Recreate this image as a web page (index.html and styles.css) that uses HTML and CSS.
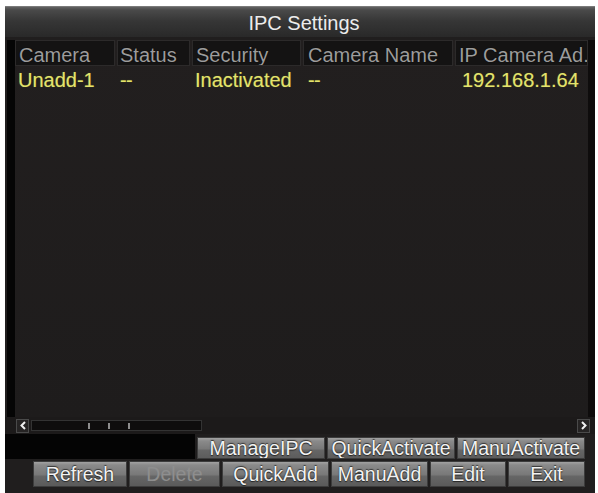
FILE: index.html
```html
<!DOCTYPE html>
<html>
<head>
<meta charset="utf-8">
<link rel="stylesheet" href="styles.css">
</head>
<body>
<div class="panel">
  <div class="title">IPC Settings</div>
  <div class="main">
    <div class="strip"></div>
    <div class="list">
      <div class="row head">
        <div class="cell">Camera</div>
        <div class="cell">Status</div>
        <div class="cell">Security</div>
        <div class="cell">Camera Name</div>
        <div class="cell">IP Camera Ad.</div>
      </div>
      <div class="row data">
        <div class="cell">Unadd-1</div>
        <div class="cell dash">--</div>
        <div class="cell">Inactivated</div>
        <div class="cell dash">--</div>
        <div class="cell">192.168.1.64</div>
      </div>
    </div>
    <div class="rstrip"></div>
  </div>
  <div class="scroll">
    <div class="arrow left"><svg width="8" height="9" viewBox="0 0 8 9"><path d="M6 1 L2.5 4.5 L6 8" fill="none" stroke="#f0f0f0" stroke-width="2"/></svg></div>
    <div class="track"><i></i><i></i><i></i></div>
    <div class="arrow right"><svg width="8" height="9" viewBox="0 0 8 9"><path d="M2 1 L5.5 4.5 L2 8" fill="none" stroke="#f0f0f0" stroke-width="2"/></svg></div>
  </div>
  <div class="btnrow r1">
    <div class="blackfill"></div>
    <div class="btn w128">ManageIPC</div>
    <div class="btn w128">QuickActivate</div>
    <div class="btn w128">ManuActivate</div>
  </div>
  <div class="btnrow r2">
    <div class="btn b-refresh">Refresh</div>
    <div class="btn b-delete disabled">Delete</div>
    <div class="btn b-quickadd">QuickAdd</div>
    <div class="btn b-manuadd">ManuAdd</div>
    <div class="btn b-edit">Edit</div>
    <div class="btn b-exit">Exit</div>
  </div>
</div>
</body>
</html>
```

FILE: styles.css
```css
html, body {
  margin: 0;
  padding: 0;
  background: #ffffff;
}

body {
  font-family: "Liberation Sans", Arial, sans-serif;
  font-size: 20px;
  overflow: hidden;
}

.panel {
  margin: 6px 0 0 5px;
  width: 590px;
  height: 487px;
  background: #201e1e;
  box-sizing: border-box;
}

.title {
  height: 31px;
  box-sizing: border-box;
  padding-top: 5px;
  line-height: 22px;
  text-align: center;
  color: #ececec;
  font-size: 20px;
  padding-left: 8px;
  background: linear-gradient(#626262 0px, #4a4a4a 3px, #363636 14px, #282828 31px);
  border-top: 1px solid #7a7a7a;
}

.main {
  margin-top: 3px;
  height: 377px;
  display: flex;
  padding-left: 2px;
}

.strip {
  width: 8px;
  background: #050505;
}

.list {
  width: 573px;
  background: linear-gradient(#221f1f, #1e1c1c);
}

.rstrip {
  flex: 1;
  background: #0e0c0c;
}

.row {
  display: grid;
  grid-template-columns: 100px 73px 109px 150px 133px;
  column-gap: 2px;
}

.cell {
  white-space: nowrap;
  overflow: hidden;
}

.head .cell {
  height: 26px;
  box-sizing: border-box;
  padding: 3px 0 0 3px;
  line-height: 22px;
  background: #141313;
  color: #9c9c9c;
  border: 1px solid #2c2a2a;
  text-shadow: 0 0 1px #000;
}

.head .cell:nth-child(2) { padding-left: 2px; }
.head .cell:nth-child(4) { padding-left: 4px; }

.data .cell {
  height: 28px;
  line-height: 28px;
  padding-left: 3px;
  color: #e3e36e;
  text-shadow: 0 0 1px #6b6b20;
}

.data .cell.dash {
  letter-spacing: -0.6px;
}

.data .cell:nth-child(4) { padding-left: 5px; }
.data .cell:nth-child(5) { padding-left: 7px; }

.scroll {
  height: 17px;
  display: flex;
  align-items: center;
  padding-left: 11px;
  background: #1c1a1a;
}

.arrow {
  width: 13px;
  height: 14px;
  box-sizing: border-box;
  border: 1px solid #4a4a4a;
  background: #262424;
  display: flex;
  align-items: center;
  justify-content: center;
}

.track {
  margin-left: 2px;
  width: 171px;
  height: 11px;
  box-sizing: border-box;
  border: 1px solid #333;
  background: #0e0d0d;
  display: flex;
  align-items: center;
  padding-left: 56px;
  gap: 18px;
}

.track i {
  width: 2px;
  height: 6px;
  background: #8c8c8c;
}

.arrow.right {
  margin-left: 375px;
}

.btnrow {
  display: flex;
}

.r1 {
  height: 25px;
  align-items: flex-end;
  gap: 2px;
}

.blackfill {
  width: 190px;
  height: 25px;
  background: #040404;
}

.r2 {
  margin-top: 2px;
  height: 26px;
  padding-left: 28px;
  gap: 2px;
}

.btn {
  box-sizing: border-box;
  height: 22px;
  line-height: 21px;
  font-size: 19.5px;
  text-align: center;
  color: #f2f2f2;
  white-space: nowrap;
  overflow: hidden;
  background: linear-gradient(#a2a2a2 0px, #8a8a8a 3px, #787878 11px, #666666 12px, #5a5a5a 22px);
  border: 1px solid #3c3c3c;
  text-shadow: 0 1px 1px #222, 0 -1px 1px #333;
}

.w128 { width: 128px; }

.r2 .btn {
  height: 26px;
  line-height: 25px;
  background: linear-gradient(#a2a2a2 0px, #8a8a8a 3px, #787878 13px, #666666 14px, #585858 26px);
}

.b-refresh { width: 94px; }
.b-delete { width: 91px; }
.b-quickadd { width: 107px; }
.b-manuadd { width: 97px; }
.b-edit { width: 76px; }
.b-exit { width: 77px; }

.btn.disabled {
  color: #8e8e8e;
  text-shadow: none;
}
```
